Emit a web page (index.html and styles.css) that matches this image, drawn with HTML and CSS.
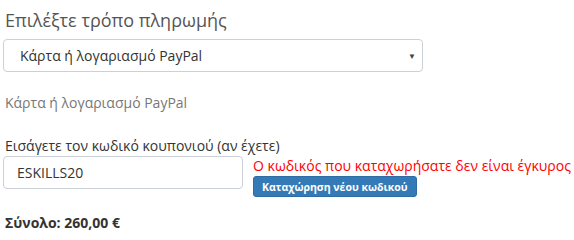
FILE: index.html
```html
<!DOCTYPE html>
<html>
<head>
<meta charset="utf-8">
<link rel="stylesheet" href="styles.css">
</head>
<body>
<div class="page">
  <h3 class="title">Επιλέξτε τρόπο πληρωμής</h3>
  <div class="select">
    <span>Κάρτα ή λογαριασμό PayPal</span>
    <span class="arrow">▼</span>
  </div>
  <p class="help">Κάρτα ή λογαριασμό PayPal</p>
  <label class="label">Εισάγετε τον κωδικό κουπονιού (αν έχετε)</label>
  <div class="coupon">
    <div class="input">ESKILLS20</div>
    <div class="side">
      <div class="error">Ο κωδικός που καταχωρήσατε δεν είναι έγκυρος</div>
      <button class="btn">Καταχώρηση νέου κωδικού</button>
    </div>
  </div>
  <div class="total">Σύνολο: 260,00 €</div>
</div>
</body>
</html>
```
FILE: styles.css
```css
html, body { margin: 0; padding: 0; background: #fff; }
body { font-family: "Open Sans", sans-serif; color: #333; }
.page { padding: 7px 3px 0 3px; }
.title { margin: 0 0 0 2px; font-size: 18px; font-weight: 400; color: #555; line-height: 26px; }
.select {
  margin-top: 6px;
  width: 420px; height: 33px; box-sizing: border-box;
  border: 1px solid #ccd0d8; border-radius: 4px;
  display: flex; align-items: center; justify-content: space-between;
  padding: 0 6px 0 16px; font-size: 14px; color: #333;
}
.arrow { font-size: 8px; color: #444; }
.help { margin: 22px 0 0 2px; font-size: 14px; color: #777; line-height: 18px; }
.label { display: block; margin: 24px 0 0 2px; font-size: 14px; color: #333; line-height: 20px; }
.coupon { display: flex; gap: 10px; margin-top: 0; }
.input {
  flex-shrink: 0;
  width: 240px; height: 33px; box-sizing: border-box;
  border: 1px solid #ccd0d8; border-radius: 4px;
  padding: 0 13px; font-size: 14px; color: #333;
  display: flex; align-items: center;
}
.side { display: flex; flex-direction: column; align-items: flex-start; }
.error { color: #f00; font-size: 14px; line-height: 20px; white-space: nowrap; }
.btn {
  margin-top: 0; height: 21px; padding: 0 8px;
  background: #337ab7; color: #fff; border: 1px solid #2e6da4; border-radius: 3px;
  font-family: "Open Sans", sans-serif; font-size: 10.5px; font-weight: 700;
}
.total { margin: 16px 0 0 2px; font-size: 14px; font-weight: 700; color: #333; }
```
